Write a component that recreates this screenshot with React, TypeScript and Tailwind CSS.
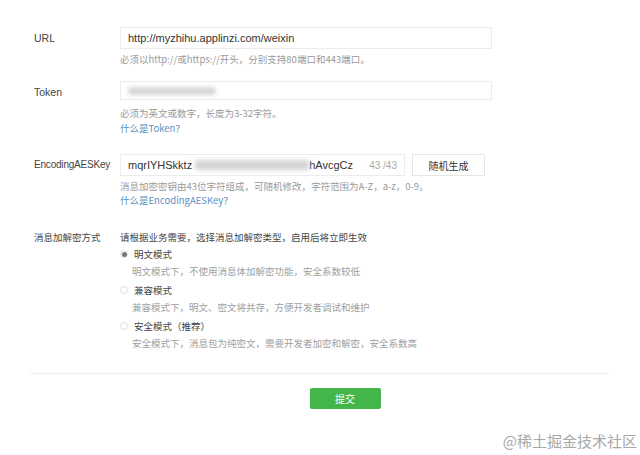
export default function App() {
  const latin = { fontFamily: '"Liberation Sans", "Noto Sans CJK SC", sans-serif' };
  const cjk = { fontFamily: '"Noto Sans CJK SC", sans-serif' };
  return (
    <main className="relative w-[640px] h-[455px] bg-white text-[#333] overflow-hidden" style={cjk}>
      <div className="pt-[27px] pl-[34px] pr-[28px]">
        {/* URL */}
        <div className="flex">
          <div className="w-[86px] text-[10.5px] leading-[22px] text-[#444]" style={latin}>URL</div>
          <div>
            <div
              className="w-[372px] h-[22px] border border-[#ececec] px-[7px] text-[11px] leading-[20px] text-[#333]"
              style={latin}
            >
              http://myzhihu.applinzi.com/weixin
            </div>
            <p className="mt-[3px] text-[9.5px] leading-[14px] text-[#9a9a9a]">
              必须以http://或https://开头，分别支持80端口和443端口。
            </p>
          </div>
        </div>

        {/* Token */}
        <div className="flex mt-[15px]">
          <div className="w-[86px] text-[10.5px] leading-[20px] pt-[1px] text-[#444]" style={latin}>Token</div>
          <div>
            <div className="w-[372px] h-[19px] border border-[#ececec] px-[7px] flex items-center">
              <div className="w-[88px] h-[8px] bg-[#d6d6d6] rounded-sm blur-[2px]" />
            </div>
            <p className="mt-[6px] text-[9.5px] leading-[14px] text-[#9a9a9a]">必须为英文或数字，长度为3-32字符。</p>
            <a className="block text-[9.5px] leading-[16px] text-[#5b8fbf]">什么是Token？</a>
          </div>
        </div>

        {/* EncodingAESKey */}
        <div className="flex mt-[18px]">
          <div className="w-[86px] text-[10px] leading-[22px] tracking-[-0.2px] text-[#444]" style={latin}>
            EncodingAESKey
          </div>
          <div>
            <div className="flex gap-[7px]">
              <div
                className="w-[285px] h-[22px] border border-[#ececec] px-[7px] flex items-center text-[11px] text-[#333]"
                style={latin}
              >
                <span>mqrIYHSkktz</span>
                <div className="w-[114px] h-[10px] bg-[#d4d4d4] blur-[2px] ml-[3px]" />
                <span>hAvcgCz</span>
                <span className="ml-auto text-[10px] text-[#aaa]">43 /43</span>
              </div>
              <button className="w-[73px] h-[22px] border border-[#e6e6e6] bg-white text-[10px] text-[#333]">随机生成</button>
            </div>
            <p className="mt-[3px] text-[9.5px] leading-[14px] text-[#9a9a9a]">
              消息加密密钥由43位字符组成，可随机修改，字符范围为A-Z，a-z，0-9。
            </p>
            <a className="block text-[9.5px] leading-[15px] text-[#5b8fbf]">什么是EncodingAESKey？</a>
          </div>
        </div>

        {/* 消息加解密方式 */}
        <div className="flex mt-[21px]">
          <div className="w-[86px] text-[9.5px] leading-[16px] text-[#444]">消息加解密方式</div>
          <div className="text-[9.5px]">
            <p className="leading-[16px] text-[#444]">请根据业务需要，选择消息加解密类型，启用后将立即生效</p>
            {[
              { t: "明文模式", d: "明文模式下，不使用消息体加解密功能，安全系数较低", on: true },
              { t: "兼容模式", d: "兼容模式下，明文、密文将共存，方便开发者调试和维护", on: false },
              { t: "安全模式（推荐）", d: "安全模式下，消息包为纯密文，需要开发者加密和解密，安全系数高", on: false },
            ].map((o, i) => (
              <div key={o.t} className={i === 0 ? "" : "mt-[2px]"}>
                <div className="flex items-center h-[18px]">
                  <span className="w-[8px] h-[8px] rounded-full border border-[#e0e0e0] flex items-center justify-center mr-[6px]">
                    {o.on && <span className="w-[5px] h-[5px] rounded-full bg-[#777]" />}
                  </span>
                  <span className="text-[#444]">{o.t}</span>
                </div>
                <p className="pl-[12px] leading-[16px] text-[#a0a0a0]">{o.d}</p>
              </div>
            ))}
          </div>
        </div>
      </div>

      <div className="mx-[30px] mt-[22px] border-t border-[#eeeeee]" />
      <div className="flex justify-center mt-[14px] pl-[50px]">
        <button className="w-[71px] h-[21px] rounded-[2px] bg-[#44b549] text-white text-[10px]">提交</button>
      </div>

      <div className="absolute right-[3px] bottom-[3px] text-[15px] text-[#a8a8a8]">@稀土掘金技术社区</div>
    </main>
  );
}
